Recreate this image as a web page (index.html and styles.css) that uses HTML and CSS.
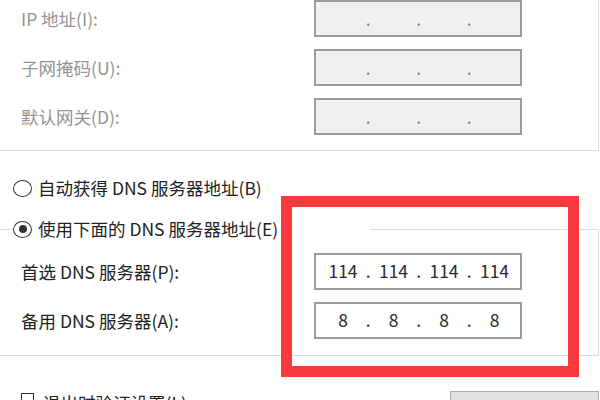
FILE: index.html
```html
<!DOCTYPE html>
<html lang="zh-CN">
<head>
<meta charset="utf-8">
<link rel="stylesheet" href="styles.css">
</head>
<body>
<div class="page">
  <div class="ip-group">
    <div class="row">
      <span class="lbl muted">IP 地址(I):</span>
      <div class="ipbox disabled"><span class="oct"></span><span class="dot">.</span><span class="oct"></span><span class="dot">.</span><span class="oct"></span><span class="dot">.</span><span class="oct"></span></div>
    </div>
    <div class="row">
      <span class="lbl muted">子网掩码(U):</span>
      <div class="ipbox disabled"><span class="oct"></span><span class="dot">.</span><span class="oct"></span><span class="dot">.</span><span class="oct"></span><span class="dot">.</span><span class="oct"></span></div>
    </div>
    <div class="row">
      <span class="lbl muted">默认网关(D):</span>
      <div class="ipbox disabled"><span class="oct"></span><span class="dot">.</span><span class="oct"></span><span class="dot">.</span><span class="oct"></span><span class="dot">.</span><span class="oct"></span></div>
    </div>
  </div>

  <label class="radio-row"><span class="radio"></span><span>自动获得 DNS 服务器地址(B)</span></label>

  <div class="dns-head">
    <span class="line-l"></span>
    <label class="legend"><span class="radio checked"></span><span>使用下面的 DNS 服务器地址(E)</span></label>
    <span class="line-r"></span>
  </div>
  <div class="dns-body">
    <div class="row">
      <span class="lbl">首选 DNS 服务器(P):</span>
      <div class="ipbox"><span class="oct">114</span><span class="dot">.</span><span class="oct">114</span><span class="dot">.</span><span class="oct">114</span><span class="dot">.</span><span class="oct">114</span></div>
    </div>
    <div class="row">
      <span class="lbl">备用 DNS 服务器(A):</span>
      <div class="ipbox"><span class="oct">8</span><span class="dot">.</span><span class="oct">8</span><span class="dot">.</span><span class="oct">8</span><span class="dot">.</span><span class="oct">8</span></div>
    </div>
  </div>

  <div class="footer">
    <label class="check"><span class="box"></span><span class="check-text">退出时验证设置(L)</span></label>
    <span class="btn">高级(V)...</span>
  </div>

  <div class="highlight"></div>
</div>
</body>
</html>
```

FILE: styles.css
```css
* { box-sizing: border-box; }
html, body {
  margin: 0;
  padding: 0;
  background: #ffffff;
}
body {
  width: 600px;
  height: 400px;
  overflow: hidden;
  font-family: "Noto Sans CJK SC", "Noto Sans", sans-serif;
  font-size: 17.5px;
  line-height: 20px;
  color: #222222;
}
.page {
  position: relative;
  width: 600px;
  height: 400px;
  overflow: hidden;
}

.ip-group {
  width: 599px;
  border-right: 1px solid #dcdcdc;
  border-bottom: 1px solid #dcdcdc;
  padding: 0 0 15px 21px;
  display: flex;
  flex-direction: column;
  gap: 12px;
}
.row {
  display: flex;
  align-items: center;
}
.lbl {
  width: 293px;
  white-space: nowrap;
}
.muted { color: #939393; }

.ipbox {
  width: 208px;
  height: 37px;
  border: 2px solid #9c9c9c;
  background: #ffffff;
  display: flex;
  align-items: center;
  padding-left: 7px;
  padding-bottom: 2px;
  color: #2a2a2a;
}
.ipbox.disabled {
  background: #f0f0f0;
  color: #7a7a7a;
  padding-bottom: 0;
}
.oct {
  width: 40px;
  text-align: center;
}
.dot {
  width: 10.5px;
  text-align: center;
}

.radio-row {
  display: flex;
  align-items: center;
  height: 20px;
  margin-top: 27px;
  padding-left: 13px;
  gap: 6px;
  white-space: nowrap;
}
.radio {
  width: 19px;
  height: 17px;
  border-radius: 50%;
  border: 1.5px solid #333333;
  background: #ffffff;
  display: inline-flex;
  align-items: center;
  justify-content: center;
  flex: none;
}
.radio.checked::after {
  content: "";
  width: 8px;
  height: 8px;
  border-radius: 50%;
  background: #333333;
}

.dns-head {
  display: flex;
  width: 599px;
  height: 20px;
  margin-top: 21px;
}
.line-l {
  width: 13px;
  height: 1px;
  margin-top: 10px;
  background: #dcdcdc;
}
.legend {
  width: 357px;
  display: flex;
  align-items: center;
  gap: 6px;
  white-space: nowrap;
}
.line-r {
  flex: 1;
  height: 10px;
  margin-top: 10px;
  border-top: 1px solid #dcdcdc;
  border-right: 1px solid #dcdcdc;
}

.dns-body {
  width: 599px;
  border-right: 1px solid #dcdcdc;
  border-bottom: 1px solid #dcdcdc;
  padding: 14px 0 16px 21px;
  display: flex;
  flex-direction: column;
  gap: 12px;
}

.footer {
  display: flex;
  justify-content: space-between;
  align-items: flex-start;
  margin-top: 35px;
  padding-left: 21px;
  padding-right: 1px;
}
.check {
  display: flex;
  align-items: flex-start;
  gap: 9px;
  white-space: nowrap;
  padding-top: 2px;
}
.box {
  width: 13px;
  height: 14px;
  border: 1.5px solid #333333;
  background: #ffffff;
}
.check-text {
  margin-top: 0;
}
.btn {
  width: 149px;
  height: 44px;
  border: 1px solid #adadad;
  background: #e1e1e1;
  display: flex;
  align-items: center;
  justify-content: center;
  padding-top: 16px;
}

.highlight {
  position: absolute;
  left: 281px;
  top: 196px;
  width: 298px;
  height: 181px;
  border: 11px solid #f8393e;
}
```
